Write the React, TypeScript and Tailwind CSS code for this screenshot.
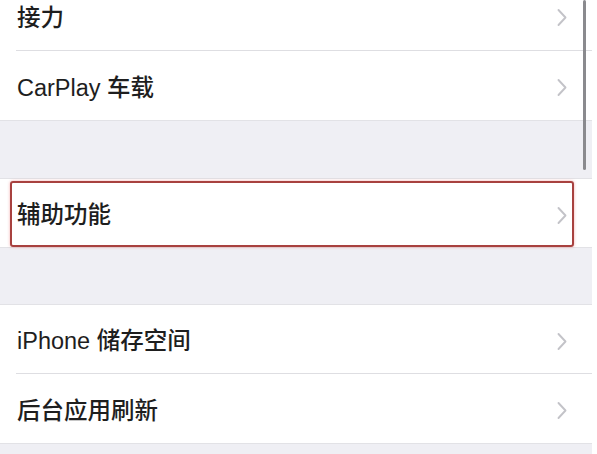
import { ReactNode } from "react";

const font = {
  fontFamily: '"Liberation Sans", "Noto Sans CJK SC", sans-serif',
};

const labelCls = "mt-[6px] text-[23.5px] font-medium leading-none text-[#1e1e1e]";

function Chevron() {
  return (
    <svg width="12" height="19" viewBox="0 0 12 19" className="mt-[4px] shrink-0">
      <path
        d="M2.5 2 L9.5 9.5 L2.5 17"
        fill="none"
        stroke="#c3c3c8"
        strokeWidth="1.9"
        strokeLinecap="round"
        strokeLinejoin="round"
      />
    </svg>
  );
}

function Row({
  label,
  className = "",
  children,
}: {
  label: string;
  className?: string;
  children?: ReactNode;
}) {
  return (
    <div className={`relative bg-white ${className}`}>
      <div className="flex h-full items-center justify-between pl-[17px] pr-[24px]">
        <span className={labelCls}>{label}</span>
        <Chevron />
      </div>
      {children}
    </div>
  );
}

export default function App() {
  return (
    <div className="flex h-[454px] w-[597px] overflow-hidden bg-white" style={font}>
      <div className="relative w-[592px] bg-[#efeff4]">
        <div className="-mt-[19px] bg-white">
          <div className="flex h-[69px] items-center justify-between pl-[17px] pr-[24px]">
            <span className={labelCls}>接力</span>
            <Chevron />
          </div>
          <div className="ml-[16px] h-px bg-[#dedee2]" />
          <div className="flex h-[69px] items-center justify-between pl-[17px] pr-[24px]">
            <span className={labelCls}>CarPlay 车载</span>
            <Chevron />
          </div>
        </div>
        <div className="h-[58px] border-t border-[#e2e2e6]" />
        <Row label="辅助功能" className="h-[70px] border-y border-[#e2e2e6]">
          <div className="pointer-events-none absolute left-[10px] right-[18px] top-[2px] bottom-[0px] rounded-[3px] border-2 border-[#a8413f] shadow-[0_0_3px_rgba(235,90,90,0.5)]" />
        </Row>
        <div className="h-[56px]" />
        <div className="border-y border-[#e2e2e6] bg-white">
          <div className="flex h-[68px] items-center justify-between pl-[17px] pr-[24px]">
            <span className={labelCls}>iPhone 储存空间</span>
            <Chevron />
          </div>
          <div className="ml-[16px] h-px bg-[#dedee2]" />
          <div className="flex h-[69px] items-center justify-between pl-[17px] pr-[24px]">
            <span className={labelCls}>后台应用刷新</span>
            <Chevron />
          </div>
        </div>
        <div className="absolute right-[6px] top-0 h-[170px] w-[3px] rounded-full bg-[#8a8a8e]" />
      </div>
    </div>
  );
}
